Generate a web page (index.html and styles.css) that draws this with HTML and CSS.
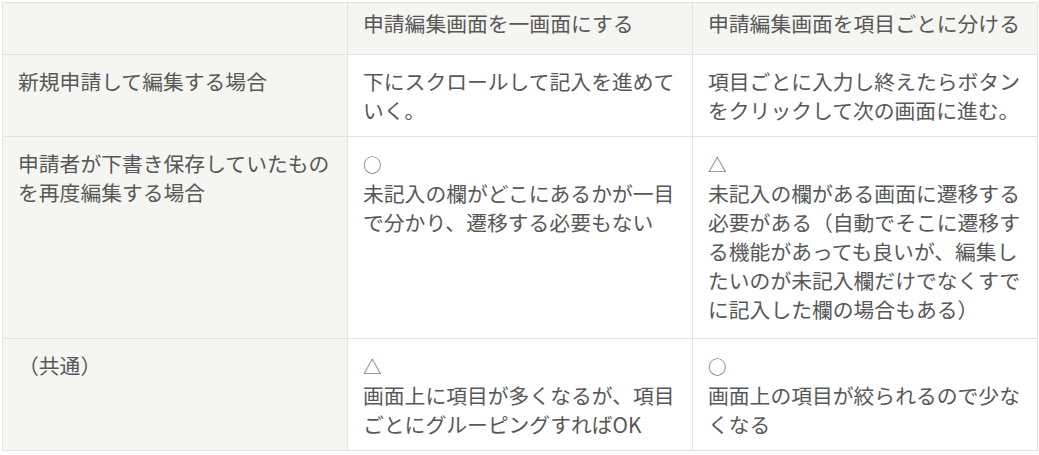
FILE: index.html
```html
<!DOCTYPE html>
<html lang="ja">
<head>
<meta charset="utf-8">
<title>申請編集画面の比較</title>
<link rel="stylesheet" href="styles.css">
</head>
<body>
<div class="wrap">
<table class="compare">
  <colgroup>
    <col class="c1"><col class="c2"><col class="c3">
  </colgroup>
  <thead>
    <tr>
      <th class="corner"></th>
      <th>申請編集画面を一画面にする</th>
      <th>申請編集画面を項目ごとに分ける</th>
    </tr>
  </thead>
  <tbody>
    <tr>
      <th>新規申請して編集する場合</th>
      <td>下にスクロールして記入を進めていく。</td>
      <td>項目ごとに入力し終えたらボタンをクリックして次の画面に進む。</td>
    </tr>
    <tr class="tall">
      <th>申請者が下書き保存していたものを再度編集する場合</th>
      <td><span class="mark">○</span><br>未記入の欄がどこにあるかが一目で分かり、遷移する必要もない</td>
      <td><span class="mark">△</span><br>未記入の欄がある画面に遷移する必要がある（自動でそこに遷移する機能があっても良いが、編集したいのが未記入欄だけでなくすでに記入した欄の場合もある）</td>
    </tr>
    <tr>
      <th>（共通）</th>
      <td><span class="mark">△</span><br>画面上に項目が多くなるが、項目ごとにグルーピングすればOK</td>
      <td><span class="mark">○</span><br>画面上の項目が絞られるので少なくなる</td>
    </tr>
  </tbody>
</table>
</div>
</body>
</html>
```

FILE: styles.css
```css
html, body {
  margin: 0;
  padding: 0;
  background: #ffffff;
}

.wrap {
  padding: 2px 2px 0 2px;
}

.compare {
  width: 1035px;
  border-collapse: collapse;
  table-layout: fixed;
  font-family: "Noto Sans CJK JP", "Noto Sans", sans-serif;
  font-size: 20.8px;
  line-height: 29px;
  color: #585858;
}

.compare col.c1,
.compare col.c2,
.compare col.c3 {
  width: 345px;
}

.compare th,
.compare td {
  border: 1px solid #e3e3e1;
  padding: 12px 15px 11px 15px;
  text-align: left;
  vertical-align: top;
  font-weight: normal;
  word-break: break-all;
}

.compare thead th {
  background: #f5f5f1;
  padding-top: 6px;
  padding-bottom: 16px;
}

.compare tbody th {
  background: #f5f5f1;
}

.compare td {
  background: #ffffff;
}

.compare tr.tall {
  height: 202px;
}

.mark {
  font-family: "Noto Sans CJK JP", sans-serif;
  font-weight: 300;
  font-size: 18.5px;
}
```
